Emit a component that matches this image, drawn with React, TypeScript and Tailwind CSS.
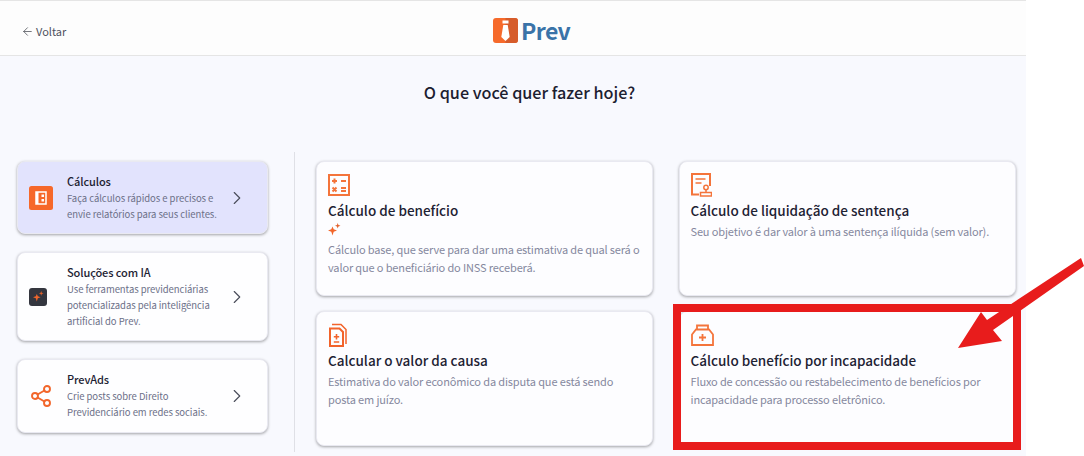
import React from "react";
import { ArrowLeft, ChevronRight, Share2 } from "lucide-react";

const font = { fontFamily: '"Noto Sans CJK SC", "Noto Sans", sans-serif' };

function Sparkles({ className }: { className: string }) {
  return (
    <svg viewBox="0 0 13 13" className={className} fill="#f2662b">
      <path d="M4.5 3.5 L5.7 6.3 L9 7.5 L5.7 8.7 L4.5 12.5 L3.3 8.7 L0 7.5 L3.3 6.3 Z" />
      <path d="M9.7 0 L10.4 2 L12.5 2.7 L10.4 3.4 L9.7 5.5 L9 3.4 L7 2.7 L9 2 Z" fill="#e2602b" />
    </svg>
  );
}

function CalcIcon() {
  return (
    <svg viewBox="0 0 22 22" className="w-[22px] h-[22px]" fill="none" stroke="#f4743b">
      <rect x="1" y="1" width="20" height="20" strokeWidth="2" />
      <path d="M4 7h5M6.5 4.5v5M13 7h5M13 14h5M13 17h5M4.5 13.5l4 4M8.5 13.5l-4 4" strokeWidth="2" />
    </svg>
  );
}

function DocStampIcon() {
  return (
    <svg viewBox="0 0 21 24" className="w-[21px] h-[24px]" fill="none" stroke="#f4743b" strokeWidth="2">
      <path d="M8 21.5H1V1h18v12" />
      <path d="M4.5 6h10M4.5 10h6" strokeWidth="1.5" />
      <circle cx="15" cy="14.5" r="2.2" strokeWidth="1.5" />
      <path d="M15 17v2M9.5 19.5h11v3.5h-11z" strokeWidth="1.5" />
    </svg>
  );
}

function DocPlusIcon() {
  return (
    <svg viewBox="0 0 20 24" className="w-[20px] h-[24px]" fill="none" stroke="#f2632b" strokeWidth="2">
      <path d="M2 23V5.5h9.5L15 9v14z" />
      <path d="M4 1.5h9l5 5V21" strokeWidth="1.5" />
      <path d="M8.5 11v5.5M5.8 13.8h5.4M5.8 19h5.4" strokeWidth="1.6" />
    </svg>
  );
}

function KitIcon() {
  return (
    <svg viewBox="0 0 23 22" className="w-[23px] h-[22px]" fill="none" stroke="#f4743b" strokeWidth="1.8">
      <path d="M6 6V1.5h11V6" />
      <path d="M5 5.5h13l4 5V21H1V10.5z" />
      <path d="M11.5 10v7M8 13.5h7" />
    </svg>
  );
}

function SideCard({
  icon,
  title,
  lines,
  active,
  className,
}: {
  icon: React.ReactNode;
  title: string;
  lines: string[];
  active?: boolean;
  className: string;
}) {
  return (
    <div
      className={`flex items-center rounded-[8px] border border-[#e9e9f1] pl-[11px] pr-[19px] shadow-[0_1px_3px_rgba(0,0,0,0.35)] ${className} ${
        active ? "bg-[#e2e3fd]" : "bg-[#fefeff]"
      }`}
    >
      <div className="w-[24px] flex justify-start shrink-0">{icon}</div>
      <div className="ml-[14px] flex-1">
        <div className="text-[11px] leading-[17px] tracking-[-0.1px] font-medium text-[#1d2233]">{title}</div>
        {lines.map((l) => (
          <div key={l} className="text-[9.5px] leading-[16px] tracking-[-0.05px] text-[#6c7088] whitespace-nowrap">
            {l}
          </div>
        ))}
      </div>
      <ChevronRight className="w-[22px] h-[22px] text-[#4a4d5a] shrink-0" strokeWidth={1.25} />
    </div>
  );
}

function MainCard({
  icon,
  title,
  lines,
  sparkle,
}: {
  icon: React.ReactNode;
  title: string;
  lines: string[];
  sparkle?: boolean;
}) {
  return (
    <div className="h-[135px] rounded-[8px] border border-[#e9e9f1] bg-[#fdfdff] px-[11px] pt-[11px] shadow-[0_1px_3px_rgba(0,0,0,0.35)]">
      <div className="h-[24px] flex items-center">{icon}</div>
      <div className="mt-[2px] text-[13.5px] leading-[22px] font-medium text-[#1d2233] whitespace-nowrap">{title}</div>
      {sparkle && <Sparkles className="w-[13px] h-[13px] mt-[2px] mb-[4px]" />}
      <div className="mt-[1px]">
        {lines.map((l) => (
          <div key={l} className="text-[11px] leading-[18px] tracking-[-0.14px] text-[#85889e] whitespace-nowrap">
            {l}
          </div>
        ))}
      </div>
    </div>
  );
}

export default function App() {
  return (
    <div style={font} className="relative w-[1084px] h-[456px] overflow-hidden bg-white">
      <div className="w-[1026px] h-[456px] bg-[#f8f9fe]">
        <header className="relative h-[56px] bg-[#fdfdfd] border-t border-b border-[#e5e5e5] flex items-center pl-[21px] pt-[6px]">
          <ArrowLeft className="w-[13px] h-[13px] text-[#55575f]" strokeWidth={1.5} />
          <span className="ml-[2px] text-[11px] text-[#4f5260]">Voltar</span>
          <div className="absolute left-[493px] top-[17px] flex items-center">
            <svg viewBox="0 0 25 25" className="w-[25px] h-[25px]">
              <rect width="25" height="25" rx="3" fill="#f66a2b" />
              <path d="M12.5 0H22a3 3 0 0 1 3 3v19a3 3 0 0 1-3 3h-9.5z" fill="#d65c2b" />
              <rect x="9.5" y="2.5" width="6" height="3" fill="#fff" />
              <path d="M10.3 7h4.4l2 12-4.2 4-4.2-4z" fill="#fff" />
            </svg>
            <span className="ml-[3px] text-[23px] leading-[25px] tracking-[-0.6px] font-bold text-[#3a73a8]">Prev</span>
          </div>
        </header>
        <h1 className="pt-[24px] h-[96px] text-center text-[16.2px] leading-[24px] font-medium text-[#1c2030] pl-[33px]">
          O que você quer fazer hoje?
        </h1>
        <div className="flex pl-[17px]">
          <div className="w-[251px] pt-[9px] flex flex-col gap-[18px]">
            <SideCard
              active
              className="h-[73px]"
              title="Cálculos"
              lines={["Faça cálculos rápidos e precisos e", "envie relatórios para seus clientes."]}
              icon={
                <svg viewBox="0 0 24 24" className="w-[24px] h-[24px]">
                  <rect width="24" height="24" rx="2.5" fill="#f6682a" />
                  <path d="M7 6h10v12H7z" fill="none" stroke="#fff" strokeWidth="1.5" />
                  <path d="M7 6h2.5v12H7z" fill="#fff" />
                  <rect x="12.5" y="8.5" width="2.5" height="2.5" fill="#fff" />
                  <rect x="12.5" y="13" width="2.5" height="2.5" fill="#fff" />
                </svg>
              }
            />
            <SideCard
              className="h-[89px]"
              title="Soluções com IA"
              lines={["Use ferramentas previdenciárias", "potencializadas pela inteligência", "artificial do Prev."]}
              icon={
                <div className="w-[18px] h-[18px] rounded-[3px] bg-[#34363f] flex items-center justify-center">
                  <Sparkles className="w-[11px] h-[11px]" />
                </div>
              }
            />
            <SideCard
              className="h-[74px] pb-[1px]"
              title="PrevAds"
              lines={["Crie posts sobre Direito", "Previdenciário em redes sociais."]}
              icon={<Share2 className="w-[24px] h-[24px] text-[#f2662b]" strokeWidth={1.9} />}
            />
          </div>
          <div className="ml-[26px] w-px h-[300px] bg-[#dfe0e6]" />
          <div className="ml-[21px] pt-[9px] grid grid-cols-[337px_337.5px] gap-x-[25.5px] gap-y-[15px] content-start">
            <MainCard
              sparkle
              icon={<CalcIcon />}
              title="Cálculo de benefício"
              lines={["Cálculo base, que serve para dar uma estimativa de qual será o", "valor que o beneficiário do INSS receberá."]}
            />
            <MainCard
              icon={<DocStampIcon />}
              title="Cálculo de liquidação de sentença"
              lines={["Seu objetivo é dar valor à uma sentença ilíquida (sem valor)."]}
            />
            <MainCard
              icon={<DocPlusIcon />}
              title="Calcular o valor da causa"
              lines={["Estimativa do valor econômico da disputa que está sendo", "posta em juízo."]}
            />
            <MainCard
              icon={<KitIcon />}
              title="Cálculo benefício por incapacidade"
              lines={["Fluxo de concessão ou restabelecimento de benefícios por", "incapacidade para processo eletrônico."]}
            />
          </div>
        </div>
      </div>
      <div className="absolute left-[673px] top-[304px] w-[348px] h-[146px] border-[8px] border-[#e81c1c]" />
      <svg className="absolute left-0 top-0 w-[1084px] h-[456px] pointer-events-none" viewBox="0 0 1084 456">
        <path d="M1081 258 L1084 266 L993 330 L1002 341 L958 348 L981 312 L987 320 Z" fill="#e81c1c" />
      </svg>
    </div>
  );
}
